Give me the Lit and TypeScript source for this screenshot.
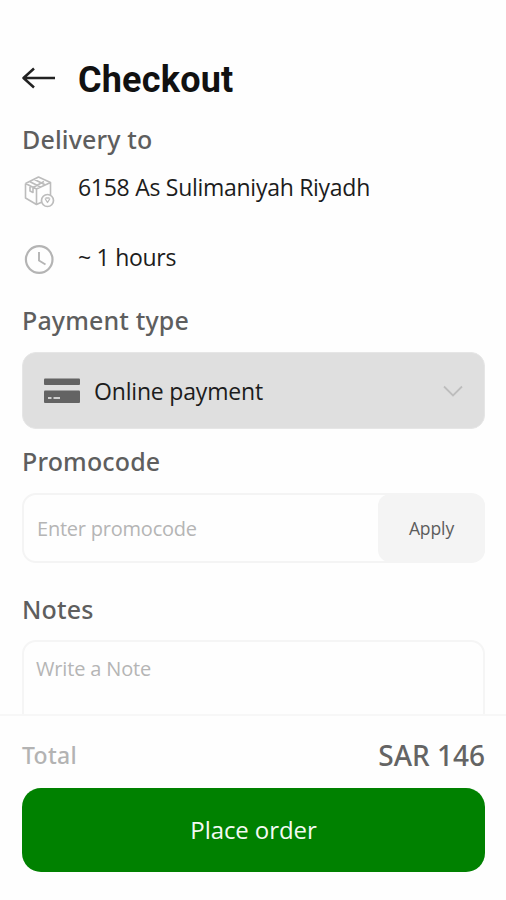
import { LitElement, html, css } from "lit";
import { customElement } from "lit/decorators.js";

@customElement("app-root")
export class AppRoot extends LitElement {
  static styles = css`
    :host {
      display: flex;
      flex-direction: column;
      width: 506px;
      height: 900px;
      box-sizing: border-box;
      overflow: hidden;
      background: #fefefe;
      color: #1c1c1c;
      font-family: "Open Sans", "Noto Sans", sans-serif;
    }
    * { box-sizing: border-box; }
    svg { display: block; flex: none; }
    button { font-family: inherit; border: 0; margin: 0; padding: 0; }
    .content {
      height: 714px;
      padding: 56px 21px 0 22px;
      overflow: hidden;
      flex: none;
    }
    .header { display: flex; height: 46px; align-items: center; }
    .header svg { margin-top: -2px; }
    .title {
      margin: 1px 0 0 22px;
      font: 700 36px/46px Roboto, sans-serif;
      letter-spacing: 0.2px;
      color: #111;
    }
    .label, .sum { font-family: "Noto Sans", "Open Sans", sans-serif; font-weight: 500; }
    .label {
      margin: 0;
      font-size: 25px;
      line-height: 36px;
      letter-spacing: 0.15px;
      color: #5e5e5e;
    }
    .delivery { margin-top: 19px; }
    .row { display: flex; height: 36px; font-size: 23px; line-height: 36px; letter-spacing: -0.28px; }
    .row svg { margin: 6px 22px 0 0; }
    .address { margin-top: 12px; }
    .eta { margin-top: 34px; }
    .eta svg { margin-top: 4px; }
    .payment { margin-top: 27px; }
    .select {
      display: flex;
      align-items: center;
      width: 100%;
      height: 77px;
      margin-top: 14px;
      padding: 0 21px;
      border: 1px solid #e6e6e6;
      border-radius: 14px;
      background: #dfdfdf;
      color: #1c1c1c;
      font-size: 23px;
      letter-spacing: -0.18px;
    }
    .method { margin: 0 auto 0 14px; }
    .promo { margin-top: 14px; }
    .field {
      display: flex;
      height: 70px;
      margin-top: 14px;
      border: 2px solid #f4f4f4;
      border-radius: 14px;
      color: #b5b5b5;
      font-size: 20px;
      letter-spacing: -0.22px;
    }
    .hint { flex: 1; padding-left: 13px; line-height: 67px; }
    .apply {
      width: 107px;
      margin: -1px -2px -1px 0;
      border-radius: 12px;
      background: #f4f4f4;
      color: #5c5c5c;
      font-size: 17.500px;
      letter-spacing: -0.1px;
    }
    .notes { margin-top: 28px; }
    .note {
      height: 110px;
      margin-top: 13px;
      padding: 11px 12px;
      border: 2px solid #f5f5f5;
      border-radius: 14px;
      color: #b5b5b5;
      font-size: 20px;
      line-height: 31px;
      letter-spacing: -0.16px;
    }
    .footer {
      flex: 1;
      padding: 21px 21px 0 22px;
      border-top: 2px solid #f7f7f7;
    }
    .sum { display: flex; justify-content: space-between; height: 36px; line-height: 36px; }
    .total { font-size: 23px; letter-spacing: 0.3px; color: #b3b3b3; }
    .amount { font-size: 28px; color: #646464; }
    .order {
      width: 100%;
      height: 84px;
      margin-top: 15px;
      padding-bottom: 2px;
      border-radius: 19px;
      background: #008100;
      color: #f3faf3;
      font-size: 24px;
      letter-spacing: -0.08px;
    }
  `;

  render() {
    return html`
      <main class="content">
        <header class="header">
          <svg width="34" height="24" viewBox="0 0 34 24" fill="none" stroke="#222" stroke-width="2.5">
            <path d="M33 12H1.5M12 2.5 1.5 12 12 21.5" stroke-linejoin="round" />
          </svg>
          <h1 class="title">Checkout</h1>
        </header>
        <h2 class="label delivery">Delivery to</h2>
        <div class="row address">
          <svg width="34" height="34" viewBox="0 0 34 34" fill="none" stroke="#bcbcbc" stroke-width="1.6" stroke-linejoin="round">
            <path d="M3.500 8.500 16.500 2 28.500 7.500V20M3.500 8.500V23L14.500 29.500 20 27M3.500 8.500 14.500 14V29.500M14.500 14 28.500 7.500M7.500 6.500 18.500 12M12 4.200 23.500 10M8 11V16L11 17.500V12.500L22 6.500" />
            <circle cx="25.500" cy="25.500" r="6" fill="#fefefe" stroke-width="1.700" />
            <path d="m23 23.500 2.500 4 2.500-4M23.500 23h4" stroke-width="1.300" />
          </svg>
          <span>6158 As Sulimaniyah Riyadh</span>
        </div>
        <div class="row eta">
          <svg width="34" height="34" viewBox="0 0 34 34" fill="none" stroke="#b4b4b4" stroke-width="2.200">
            <circle cx="17.200" cy="16.500" r="13.300" />
            <path d="M17 9V17.500L23.500 21.500" stroke-width="1.900" />
          </svg>
          <span>~ 1 hours</span>
        </div>
        <h2 class="label payment">Payment type</h2>
        <button class="select">
          <svg width="36" height="26" viewBox="0 0 36 26">
            <rect y="0.500" width="36" height="6.500" rx="1" fill="#636363" />
            <rect y="12.500" width="36" height="12.500" rx="1" fill="#636363" />
            <path d="M4 20H7.500M9.500 20H16" stroke="#cfcfcf" stroke-width="2" />
          </svg>
          <span class="method">Online payment</span>
          <svg width="20" height="12" viewBox="0 0 20 12" fill="none" stroke="#bdbdbd" stroke-width="1.800">
            <path d="M1 1.500 10 10.500 19 1.500" />
          </svg>
        </button>
        <h2 class="label promo">Promocode</h2>
        <div class="field">
          <span class="hint">Enter promocode</span>
          <button class="apply">Apply</button>
        </div>
        <h2 class="label notes">Notes</h2>
        <div class="note">Write a Note</div>
      </main>
      <footer class="footer">
        <div class="sum">
          <span class="total">Total</span>
          <span class="amount">SAR 146</span>
        </div>
        <button class="order">Place order</button>
      </footer>
    `;
  }
}
